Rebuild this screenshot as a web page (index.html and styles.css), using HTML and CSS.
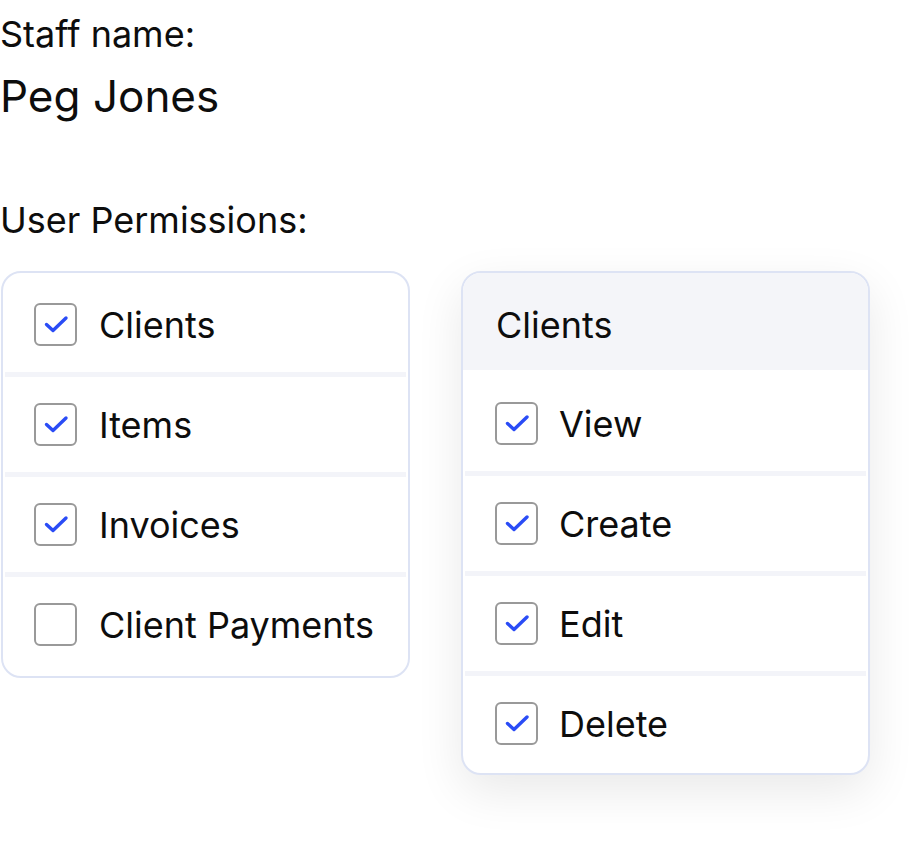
FILE: index.html
```html
<!DOCTYPE html>
<html lang="en">
<head>
    <meta charset="UTF-8">
    <meta name="viewport" content="width=device-width, initial-scale=1.0">
    <title>Staff Permissions</title>
    <link rel="stylesheet" href="styles.css">
</head>
<body>
    <div class="staff">
        <div class="field-label">Staff name:</div>
        <div class="staff-name">Peg Jones</div>
    </div>

    <div class="field-label">User Permissions:</div>

    <div class="permissions">
        <div class="card card-list">
            <label class="row">
                <span class="check"><svg viewBox="0 0 39 39"><path d="M10.5 19.5 L17 25.5 L30 13"/></svg></span>
                Clients
            </label>
            <label class="row">
                <span class="check"><svg viewBox="0 0 39 39"><path d="M10.5 19.5 L17 25.5 L30 13"/></svg></span>
                Items
            </label>
            <label class="row">
                <span class="check"><svg viewBox="0 0 39 39"><path d="M10.5 19.5 L17 25.5 L30 13"/></svg></span>
                Invoices
            </label>
            <label class="row">
                <span class="check"></span>
                Client Payments
            </label>
        </div>

        <div class="card card-detail">
            <div class="card-header">Clients</div>
            <label class="row">
                <span class="check"><svg viewBox="0 0 39 39"><path d="M10.5 19.5 L17 25.5 L30 13"/></svg></span>
                View
            </label>
            <label class="row">
                <span class="check"><svg viewBox="0 0 39 39"><path d="M10.5 19.5 L17 25.5 L30 13"/></svg></span>
                Create
            </label>
            <label class="row">
                <span class="check"><svg viewBox="0 0 39 39"><path d="M10.5 19.5 L17 25.5 L30 13"/></svg></span>
                Edit
            </label>
            <label class="row">
                <span class="check"><svg viewBox="0 0 39 39"><path d="M10.5 19.5 L17 25.5 L30 13"/></svg></span>
                Delete
            </label>
        </div>
    </div>
</body>
</html>
```

FILE: styles.css
```css
:root {
    --text-color: #0d0d0d;
    --border-color: #dde3f4;
    --divider-color: #f3f4f9;
    --header-color: #f4f5f9;
    --check-color: #2a4cf6;
}

body {
    font-family: 'Inter', 'Noto Sans', sans-serif;
    margin: 0;
    padding: 0 0 80px;
    background-color: white;
    color: var(--text-color);
}

.staff {
    padding-top: 12px;
    margin-bottom: 76px;
}

.field-label {
    font-size: 36px;
    line-height: 44px;
}

.staff-name {
    font-size: 44px;
    line-height: 52px;
    margin-top: 14px;
}

.permissions {
    display: flex;
    align-items: flex-start;
    gap: 51px;
    margin-top: 29px;
    padding-left: 1px;
}

.card {
    box-sizing: border-box;
    width: 409px;
    border: 2px solid var(--border-color);
    border-radius: 20px;
    background-color: white;
    overflow: hidden;
}

.card-list {
    padding: 4px 0;
}

.card-detail {
    padding-bottom: 2px;
    box-shadow: 0 16px 48px rgba(0, 0, 0, 0.09);
}

.card-header {
    box-sizing: border-box;
    height: 97px;
    padding: 7px 0 0 33px;
    display: flex;
    align-items: center;
    background-color: var(--header-color);
    font-size: 36px;
}

.row {
    box-sizing: border-box;
    display: flex;
    align-items: center;
    gap: 22px;
    height: 100px;
    margin: 0 2px;
    padding-left: 29px;
    border-top: 5px solid var(--divider-color);
    font-size: 36px;
}

.card-list .row:first-child {
    height: 95px;
    border-top: none;
}

.card-detail .row {
    padding-left: 30px;
    gap: 21px;
}

.card-header + .row {
    height: 95px;
    margin-top: 6px;
    border-top: none;
}

.check {
    box-sizing: border-box;
    width: 43px;
    height: 43px;
    border: 2px solid #999999;
    border-radius: 6px;
    flex-shrink: 0;
}

.check svg {
    display: block;
    width: 39px;
    height: 39px;
    fill: none;
    stroke: var(--check-color);
    stroke-width: 3.4;
    stroke-linecap: round;
    stroke-linejoin: round;
}
```
